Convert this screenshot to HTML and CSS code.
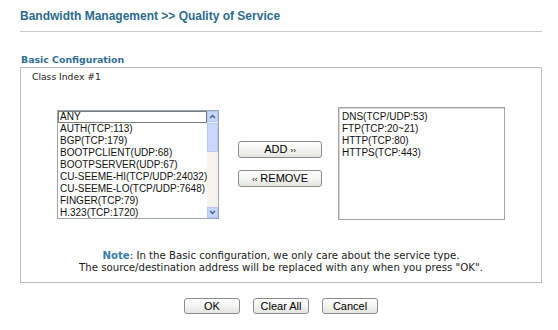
FILE: index.html
```html
<!DOCTYPE html>
<html>
<head>
<meta charset="utf-8">
<link rel="stylesheet" href="styles.css">
</head>
<body>
<div class="page">
  <h1 class="title">Bandwidth Management &gt;&gt; Quality of Service</h1>
  <h2 class="section">Basic Configuration</h2>
  <div class="box">
    <div class="class-index">Class Index #1</div>
    <div class="lists">
      <div class="listbox">
        <div class="items">
          <div class="item focus">ANY</div>
          <div class="item">AUTH(TCP:113)</div>
          <div class="item">BGP(TCP:179)</div>
          <div class="item">BOOTPCLIENT(UDP:68)</div>
          <div class="item">BOOTPSERVER(UDP:67)</div>
          <div class="item">CU-SEEME-HI(TCP/UDP:24032)</div>
          <div class="item">CU-SEEME-LO(TCP/UDP:7648)</div>
          <div class="item">FINGER(TCP:79)</div>
          <div class="item">H.323(TCP:1720)</div>
        </div>
        <div class="scrollbar">
          <div class="sb-btn"><svg width="9" height="9" viewBox="0 0 9 9"><path d="M2 6 L4.5 3.5 L7 6" fill="none" stroke="#4d6185" stroke-width="1.5"/></svg></div>
          <div class="sb-thumb"></div>
          <div class="sb-track"></div>
          <div class="sb-btn"><svg width="9" height="9" viewBox="0 0 9 9"><path d="M2 3 L4.5 5.5 L7 3" fill="none" stroke="#4d6185" stroke-width="1.5"/></svg></div>
        </div>
      </div>
      <div class="actions">
        <button class="btn btn-wide">ADD <span class="arr">››</span></button>
        <button class="btn btn-wide"><span class="arr">‹‹</span> REMOVE</button>
      </div>
      <div class="listbox right">
        <div class="items">
          <div class="item">DNS(TCP/UDP:53)</div>
          <div class="item">FTP(TCP:20~21)</div>
          <div class="item">HTTP(TCP:80)</div>
          <div class="item">HTTPS(TCP:443)</div>
        </div>
      </div>
    </div>
    <div class="note">
      <div><span class="note-label">Note</span>: In the Basic configuration, we only care about the service type.</div>
      <div>The source/destination address will be replaced with any when you press "OK".</div>
    </div>
  </div>
  <div class="footer">
    <button class="btn btn-ok">OK</button>
    <button class="btn btn-ok">Clear All</button>
    <button class="btn btn-ok">Cancel</button>
  </div>
</div>
</body>
</html>
```
FILE: styles.css
```css
html, body {
  margin: 0;
  padding: 0;
  background: #ffffff;
}
.page {
  width: 522px;
  margin-left: 20px;
  font-family: "DejaVu Sans", Verdana, sans-serif;
  font-size: 9.2px;
  color: #1a1a1a;
}
.title {
  margin: 0;
  padding: 9px 0 8px 0;
  font-family: "Liberation Sans", Arial, sans-serif;
  font-size: 12px;
  line-height: 14px;
  font-weight: bold;
  color: #2c6b8e;
  border-bottom: 1px solid #c9c9c9;
}
.section {
  margin: 22px 0 1px 1px;
  font-size: 9.4px;
  line-height: 12px;
  font-weight: bold;
  color: #2f6f95;
}
.box {
  width: 522px;
  box-sizing: border-box;
  border: 1px solid #bdbdbd;
  padding: 3px 0 8px 0;
}
.class-index {
  padding-left: 11px;
  line-height: 12px;
}
.lists {
  display: flex;
  align-items: center;
  margin: 24px 0 0 36px;
}
.listbox {
  display: flex;
  width: 162px;
  height: 109px;
  box-sizing: border-box;
  border: 1px solid #9aa6b3;
  background: #fff;
  font-family: "Liberation Sans", Arial, sans-serif;
  font-size: 10px;
  color: #111;
  margin-top: 2px;
}
.listbox.right {
  width: 167px;
  height: 113px;
  margin-left: 16px;
  margin-top: 0;
  border: 1px solid #a3a3a3;
  box-shadow: inset 1px 1px 0 #d6d6d6;
}
.items {
  flex: 1;
  overflow: hidden;
  padding-top: 0;
}
.right .items {
  padding: 3px 0 0 1px;
}
.item {
  line-height: 12px;
  padding-left: 2px;
  white-space: nowrap;
}
.item.focus {
  box-shadow: inset 0 0 0 1px #7c7c7c;
}
.scrollbar {
  width: 11px;
  display: flex;
  flex-direction: column;
  background: #f4f3ee;
}
.sb-btn {
  height: 11px;
  box-sizing: border-box;
  background: #c6d6fb;
  border: 1px solid #b7c9f3;
  display: flex;
  align-items: center;
  justify-content: center;
}
.sb-btn svg {
  display: block;
}
.sb-thumb {
  height: 29px;
  box-sizing: border-box;
  background: #c9d8fb;
  border: 1px solid #b7c9f3;
  margin-top: 1px;
}
.sb-track {
  flex: 1;
}
.actions {
  display: flex;
  flex-direction: column;
  gap: 12px;
  margin-left: 19px;
}
.btn {
  box-sizing: border-box;
  height: 17px;
  padding: 0;
  font-family: "Liberation Sans", Arial, sans-serif;
  font-size: 11px;
  color: #000;
  background: linear-gradient(#ffffff, #f1f1ee 60%, #e4e4df);
  border: 1px solid #8d8d8d;
  border-radius: 3px;
}
.btn-wide {
  width: 84px;
}
.arr {
  font-size: 8px;
}
.note {
  margin-top: 30px;
  text-align: center;
  line-height: 12px;
  font-size: 10.2px;
}
.note-label {
  font-weight: bold;
  color: #3a7ea6;
}
.footer {
  display: flex;
  justify-content: center;
  gap: 13px;
  margin-top: 15px;
}
.btn-ok {
  width: 56px;
  height: 16px;
}
```
